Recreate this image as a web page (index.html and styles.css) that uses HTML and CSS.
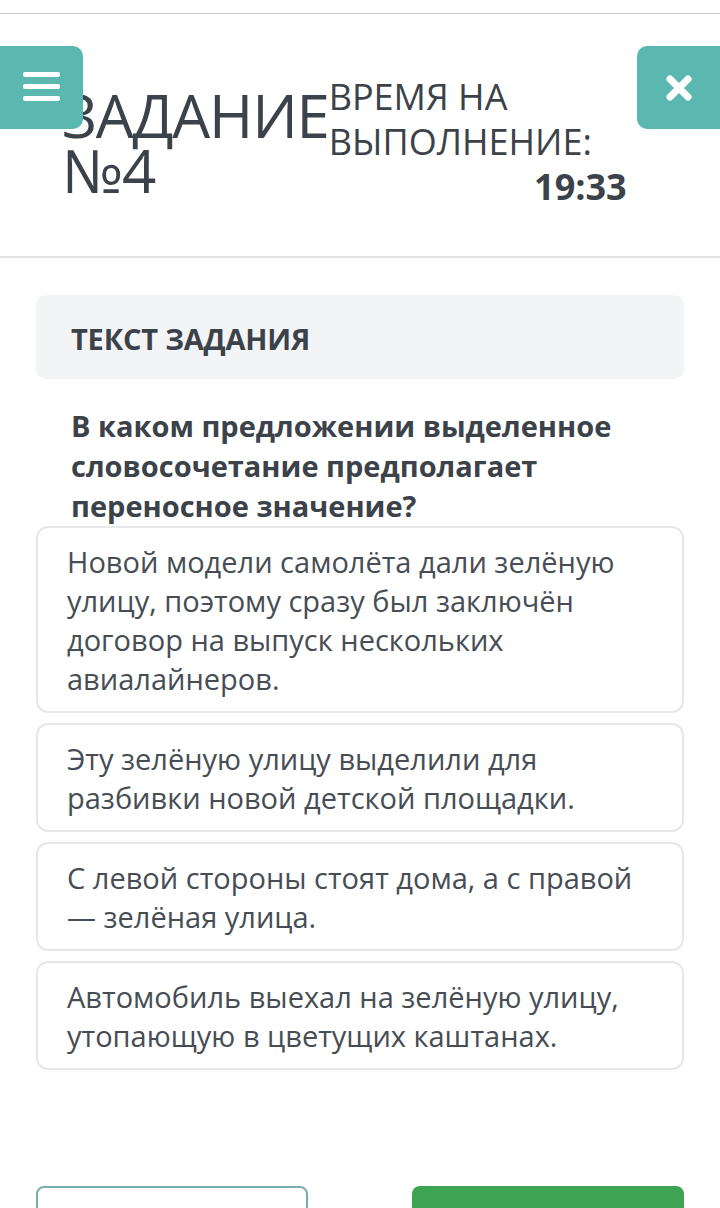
FILE: index.html
```html
<!DOCTYPE html>
<html lang="ru">
<head>
<meta charset="utf-8">
<link rel="stylesheet" href="styles.css">
</head>
<body>
<div class="topstrip"></div>
<header class="header">
  <button class="menu-btn" aria-label="Меню">
    <span></span><span></span><span></span>
  </button>
  <h1 class="title">ЗАДАНИЕ<br>№4</h1>
  <div class="timer">
    <div class="timer-label">ВРЕМЯ НА<br>ВЫПОЛНЕНИЕ:</div>
    <div class="timer-value">19:33</div>
  </div>
  <button class="close-btn" aria-label="Закрыть">
    <svg width="30" height="30" viewBox="0 0 30 30"><path d="M6 6 L24 24 M24 6 L6 24" stroke="#fff" stroke-width="7" stroke-linecap="round"/></svg>
  </button>
</header>
<main class="main">
  <div class="task-card">ТЕКСТ ЗАДАНИЯ</div>
  <p class="question">В каком предложении выделенное словосочетание предполагает переносное значение?</p>
  <div class="options">
    <div class="option">Новой модели самолёта дали зелёную улицу, поэтому сразу был заключён договор на выпуск нескольких авиалайнеров.</div>
    <div class="option">Эту зелёную улицу выделили для разбивки новой детской площадки.</div>
    <div class="option">С левой стороны стоят дома, а с правой — зелёная улица.</div>
    <div class="option">Автомобиль выехал на зелёную улицу, утопающую в цветущих каштанах.</div>
  </div>
  <div class="buttons">
    <button class="btn btn-outline"></button>
    <button class="btn btn-fill"></button>
  </div>
</main>
</body>
</html>
```
FILE: styles.css
```css
* { box-sizing: border-box; }
html, body { margin: 0; padding: 0; background: #fff; }
body {
  font-family: "Open Sans", "Noto Sans", sans-serif;
  color: #3c4249;
  width: 720px;
  height: 1208px;
  overflow: hidden;
}
.topstrip {
  height: 14px;
  border-bottom: 1px solid #cdcdcd;
}
.header {
  position: relative;
  height: 244px;
  border-bottom: 2px solid #e4e4e4;
  display: flex;
  align-items: flex-start;
  padding-left: 62px;
}
.menu-btn {
  position: absolute;
  left: 0;
  top: 32px;
  width: 83px;
  height: 83px;
  border: none;
  background: #5bb8b0;
  border-radius: 0 10px 10px 0;
  display: flex;
  flex-direction: column;
  justify-content: center;
  align-items: center;
  gap: 7px;
  padding: 0 0 2px 0;
  z-index: 2;
}
.menu-btn span {
  display: block;
  width: 37px;
  height: 5px;
  background: #fff;
  border-radius: 2px;
}
.close-btn {
  position: absolute;
  right: 0;
  top: 32px;
  width: 83px;
  height: 83px;
  border: none;
  background: #5bb8b0;
  border-radius: 10px 0 0 10px;
  display: flex;
  justify-content: center;
  align-items: center;
  padding: 0;
}
.title {
  margin: 74px 0 0 0;
  font-size: 60px;
  line-height: 55px;
  font-weight: 400;
  color: #3c4249;
  letter-spacing: -1.2px;
}
.timer {
  width: 298px;
  margin-top: 60px;
}
.timer-label {
  font-size: 36px;
  line-height: 45px;
  font-weight: 400;
}
.timer-value {
  text-align: right;
  font-size: 36px;
  line-height: 46px;
  font-weight: 700;
}
.main {
  padding: 37px 36px 0 36px;
}
.task-card {
  height: 84px;
  background: #f3f4f6;
  border-radius: 10px;
  display: flex;
  align-items: center;
  padding-left: 35px;
  padding-top: 2px;
  font-size: 29px;
  font-weight: 700;
  letter-spacing: -0.2px;
}
.question {
  margin: 27px 0 0 0;
  padding: 0 20px 0 35px;
  font-size: 29px;
  line-height: 40px;
  font-weight: 700;
  letter-spacing: 0;
}
.options {
  display: flex;
  flex-direction: column;
  gap: 10px;
}
.option {
  border: 2px solid #e6e7e9;
  border-radius: 12px;
  padding: 14px 20px 13px 29px;
  font-size: 29px;
  line-height: 39px;
  letter-spacing: 0;
  color: #474d54;
}
.buttons {
  margin-top: 116px;
  display: flex;
  justify-content: space-between;
}
.btn {
  width: 272px;
  height: 70px;
  border-radius: 8px;
}
.btn-outline {
  background: #fff;
  border: 2px solid #77aeab;
}
.btn-fill {
  background: #3ea353;
  border: none;
}
```
